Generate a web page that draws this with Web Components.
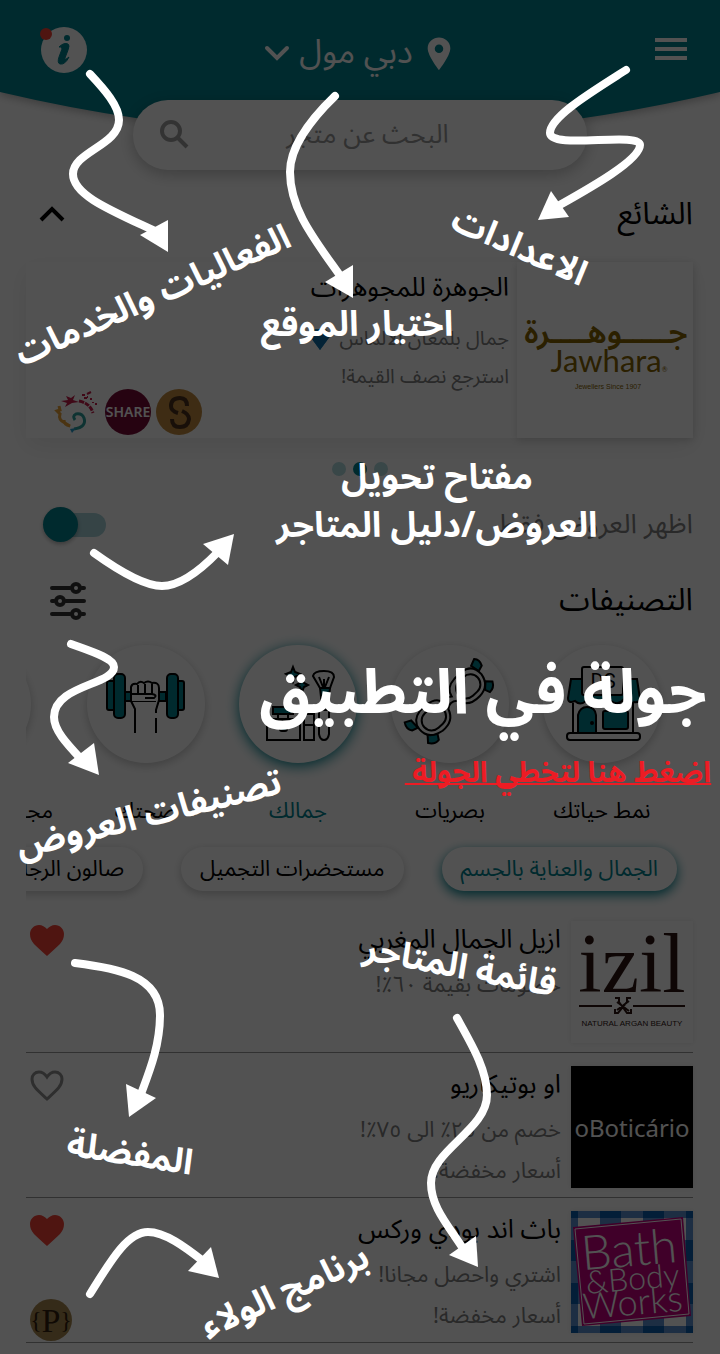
<!DOCTYPE html>
<html lang="ar" dir="rtl">
<head>
<meta charset="utf-8">
<meta name="viewport" content="width=device-width, initial-scale=1">
<title>دبي مول</title>
<style>
  :root { --teal: #00838f; --muted: #808080; --gutter: 26px; }
  html { background: #fff; }
  body { margin: 0; font-family: "Noto Sans Arabic", "DejaVu Sans", "Noto Sans", sans-serif; color: #000; }
</style>
</head>
<body>
<mall-app></mall-app>
<script>
const RESET = `
  * { box-sizing: border-box; }
  button { font: inherit; color: inherit; background: none; border: 0; margin: 0; padding: 0; display: block; cursor: pointer; }
  svg { display: block; direction: ltr; }
`;
function define(name, html, setup) {
  const template = document.createElement('template');
  template.innerHTML = html;
  customElements.define(name, class extends HTMLElement {
    constructor() {
      super();
      this.attachShadow({ mode: 'open' }).append(template.content.cloneNode(true));
    }
    connectedCallback() { if (setup) setup(this, this.shadowRoot); }
  });
}

/* ---- header with location picker ---- */
define('mall-header', `<style>${RESET}
  :host { display: block; position: relative; height: 100px; color: #fff; }
  .curve { position: absolute; inset: 0 0 auto 0; width: 100%; height: 150px; filter: drop-shadow(0 2px 5px rgba(0,0,0,.3)); }
  nav { position: relative; display: grid; grid-template-columns: 1fr auto 1fr; align-items: center; padding: 21px 33px 0; }
  .info { justify-self: end; margin-left: 7px; }
  .place { display: flex; align-items: center; gap: 9px; margin-top: 8px; font-size: 33px; line-height: 48px; }
</style>
<svg class="curve" viewBox="0 0 720 150" preserveAspectRatio="none" aria-hidden="true"><path d="M0 0H720V92Q360 177 0 92Z" fill="#00838f"/></svg>
<nav>
  <button aria-label="القائمة"><svg width="32" height="24" viewBox="0 0 32 24" stroke="#fff" stroke-width="4"><path d="M0 3H32M0 12H32M0 21H32"/></svg></button>
  <button class="place">
    <svg width="34" height="34" viewBox="0 0 24 24" fill="#fff"><path d="M12 1C8 1 4 4 4 8.600C4 14 12 24 12 24S20 14 20 8.600C20 4 16 1 12 1zm0 11a3 3 0 1 1 0-6 3 3 0 0 1 0 6z"/></svg>
    <span>دبي مول</span>
    <svg width="26" height="18" viewBox="0 0 26 18" fill="none" stroke="#fff" stroke-width="4" stroke-linecap="round"><path d="M3 4L13 14L23 4"/></svg>
  </button>
  <button class="info" aria-label="معلومات"><svg width="47" height="49" viewBox="0 0 47 49"><circle cx="24" cy="25" r="23" fill="#fff"/><circle cx="27" cy="13" r="3" fill="#00838f"/><path d="M19 22Q24 17 28 19Q30 20 28 25L25 33Q24 36 29 32Q25 40 20 39Q17 38 19 32L22 24Q22 21 19 22Z" fill="#00838f" stroke="#00838f" stroke-width="1"/><circle cx="6" cy="9" r="6" fill="#f44336"/></svg></button>
</nav>`);

define('search-bar', `<style>${RESET}
  :host { display: block; position: relative; width: 63%; margin: 0 auto; }
  form { display: flex; align-items: center; height: 70px; padding: 0 41px 0 26px; background: #fff; border-radius: 35px; box-shadow: 0 4px 16px rgba(0,0,0,.25); }
  input { flex: 1; min-width: 0; border: 0; padding: 0; background: none; outline: 0; text-align: center; font: 26px/40px "Noto Sans Arabic", "DejaVu Sans", sans-serif; }
  input::placeholder { color: #9a9a9a; opacity: 1; }
</style>
<form role="search" onsubmit="return false">
  <input type="text" aria-label="البحث عن متجر" placeholder="البحث عن متجر">
  <button aria-label="بحث"><svg width="30" height="30" viewBox="0 0 30 30" fill="none" stroke="#a0a0a0" stroke-width="4"><circle cx="12" cy="11" r="9"/><path d="M18 17L28 27"/></svg></button>
</form>`);

define('section-heading', `<style>${RESET}
  :host { display: flex; align-items: center; justify-content: space-between; }
  h2 { margin: 0; font-size: 31px; line-height: 48px; font-weight: 400; }
</style><h2><slot></slot></h2><slot name="action"></slot>`);

define('icon-button', `<style>${RESET}</style><button><slot></slot></button>`, (el, root) => {
  root.querySelector('button').setAttribute('aria-label', el.getAttribute('label'));
});

/* ---- promoted store ---- */
define('promo-card', `<style>${RESET}
  :host { display: flex; height: 176px; background: #fff; box-shadow: 0 8px 24px rgba(0,0,0,.08); }
  .logo { width: 176px; flex: none; box-shadow: 0 2px 8px rgba(0,0,0,.15); }
  .body { position: relative; flex: 1; display: flex; flex-direction: column; padding: 3px 8px 3px 31px; }
  h3 { margin: 0; font-size: 26px; line-height: 46px; font-weight: 400; }
  p { display: flex; align-items: center; gap: 9px; margin: 0; font-size: 20px; line-height: 38px; color: var(--muted); }
  p:first-of-type { padding-top: 9px; }
  .badges { position: absolute; left: 28px; bottom: 2px; display: flex; gap: 4px; direction: ltr; }
</style>
<div class="logo"><svg width="176" height="176" viewBox="0 0 176 176" role="img" aria-label="Jawhara">
  <text x="89" y="81" text-anchor="middle" font-family="Noto Sans Arabic" font-weight="600" font-size="32" fill="#866300">جـــــوهــــرة</text>
  <text x="92" y="110" text-anchor="middle" font-family="Lato" font-size="31" fill="#866300">Jawhara<tspan font-size="7">®</tspan></text>
  <text x="91" y="127" text-anchor="middle" font-family="Liberation Sans" font-size="7" fill="#866300">Jewellers Since 1907</text>
</svg></div>
<div class="body">
  <h3>الجوهرة للمجوهرات</h3>
  <p>جمال بلمعان الألماس <svg width="22" height="22" viewBox="0 0 22 22"><path d="M5 1H17L22 7L11 22L0 7Z" fill="#1b8fc4"/><path d="M0 7H22L11 22Z" fill="#0f6fa8"/></svg></p>
  <p>استرجع نصف القيمة!</p>
  <div class="badges">
    <svg width="47" height="47" viewBox="0 0 47 47" fill="none"><path d="M7 12L14 11L12 7L17 9L21 6L19 11L25 13L18 14L11 18L13 14Z" fill="#c41e4a"/><path d="M25 12Q36 14 39 24" stroke="#c41e4a" stroke-width="3" stroke-dasharray="5 1"/><path d="M28 6H31M33 5L37 3M30 9H33M36 10H38M42 14V16M33 8H34M39 13V14" stroke="#c41e4a" stroke-width="2"/><path d="M5 17L6 21L3 22L6 25Q4 31 11 34L16 37Q10 36 10 31" stroke="#e8a13a" stroke-width="3"/><path d="M20 40Q33 38 30 29Q28 24 22 25Q18 27 21 31" stroke="#2d9e9b" stroke-width="3"/><path d="M16 40L22 39L18 44Z" fill="#289ccb"/></svg>
    <svg width="47" height="47" viewBox="0 0 47 47"><circle cx="23" cy="23" r="23" fill="#780c36"/><text x="23" y="28" text-anchor="middle" font-family="Noto Sans" font-weight="600" font-size="14" fill="#fff">SHARE</text></svg>
    <svg width="47" height="47" viewBox="0 0 47 47"><circle cx="23" cy="23" r="23" fill="#c08a3e"/><path d="M31 17Q31 9 24 9Q15 9 15 17Q15 22 22 24M26 22Q33 25 33 30Q32 38 24 38Q16 38 16 30" fill="none" stroke="#4b311c" stroke-width="4"/></svg>
  </div>
</div>`);

define('pager-dots', `<style>
  :host { display: flex; justify-content: center; gap: 7px; }
  i { width: 14px; height: 14px; border-radius: 50%; background: #b2dbdf; }
  i.on { background: var(--teal); }
</style><i></i><i class="on"></i><i></i>`);

define('offer-switch', `<style>${RESET}
  :host { display: flex; align-items: center; justify-content: space-between; color: var(--muted); }
  label { font-size: 27px; line-height: 40px; }
  input { appearance: none; position: relative; width: 58px; height: 24px; margin: 0 0 0 22px; border-radius: 12px; background: #a8d3da; }
  input::before { content: ""; position: absolute; left: -5px; top: -6px; width: 35px; height: 35px; border-radius: 50%; background: var(--teal); box-shadow: 0 2px 4px rgba(0,0,0,.3); }
</style><label for="only">اظهر العروض فقط</label><input id="only" type="checkbox" role="switch">`);

/* ---- categories ---- */
define('category-item', `<style>${RESET}
  :host { display: block; flex: none; }
  button { display: flex; flex-direction: column; align-items: center; min-width: 118px; }
  .disc { width: 118px; height: 118px; border-radius: 50%; background: #fff; box-shadow: 0 3px 10px rgba(0,0,0,.22); }
  span { margin-top: 28px; font-size: 22px; line-height: 40px; white-space: nowrap; }
  :host([active]) .disc { box-shadow: 0 3px 14px var(--teal); }
  :host([active]) span { color: var(--teal); }
</style><button><div class="disc"><slot name="icon"></slot></div><span><slot></slot></span></button>`);

define('filter-chip', `<style>${RESET}
  :host { display: block; flex: none; }
  button { height: 44px; padding: 0 19px; border-radius: 22px; background: #fff; box-shadow: 0 3px 10px rgba(0,0,0,.22); font-size: 22px; line-height: 40px; white-space: nowrap; }
  :host([active]) button { color: var(--teal); box-shadow: 0 4px 12px var(--teal); }
</style><button><slot></slot></button>`);

define('scroll-strip', `<style>
  :host { display: flex; gap: 34px; overflow: hidden; margin: -20px 0; padding: 20px 0; }
</style><slot></slot>`);

/* ---- store list ---- */
define('store-row', `<style>${RESET}
  :host { display: flex; min-height: 145px; padding-top: 13px; border-bottom: 1px solid #999; }
  .logo { width: 122px; height: 122px; flex: none; box-shadow: 0 0 6px rgba(0,0,0,.1); }
  .text { flex: 1; padding-right: 10px; }
  h3 { margin: -3px 0 3px; font-size: 26px; line-height: 44px; font-weight: 400; }
  ::slotted(p) { margin: 0; font-size: 22px; line-height: 41px; color: var(--muted); }
  .side { display: flex; flex-direction: column; justify-content: space-between; align-items: flex-end; padding: 3px 0 0 3px; }
</style>
<div class="logo"><slot name="logo"></slot></div>
<div class="text"><h3></h3><slot></slot></div>
<div class="side"><button aria-label="المفضلة"><svg width="36" height="33" viewBox="0 0 36 33"><path d="M18 32C6 21 1 18 1 10C1 5 5 1 10 1C13 1 16 3 18 5C20 3 23 1 26 1C31 1 35 5 35 10C35 18 30 21 18 32Z"/></svg></button><slot name="badge"></slot></div>`,
(el, root) => {
  root.querySelector('h3').textContent = el.getAttribute('name');
  const heart = root.querySelector('path');
  if (el.hasAttribute('favourite')) heart.setAttribute('fill', '#f44336');
  else {
    heart.setAttribute('d', 'M18 30C8 21 3 17 3 10C3 6 6 3 10 3C13 3 16 5 18 8C20 5 23 3 26 3C30 3 33 6 33 10C33 17 28 21 18 30Z');
    heart.setAttribute('fill', 'none');
    heart.setAttribute('stroke', '#909090');
    heart.setAttribute('stroke-width', '3');
  }
});

/* ---- guided tour over the app ---- */
define('tour-label', `<style>
  :host { position: absolute; color: #fff; font-weight: 700; font-size: 35px; line-height: 48px; white-space: nowrap; text-align: center; }
  div { transform: translate(-50%, -50%) rotate(var(--turn, 0deg)); position: absolute; left: 0; top: 0; }
</style><div><slot></slot></div>`);

define('tour-overlay', `<style>${RESET}
  :host { position: absolute; inset: 0; overflow: hidden; background: rgba(0,0,0,.68); direction: rtl; }
  svg { position: absolute; left: 0; top: 0; width: 720px; height: 1354px; }
  .big { font-size: 62px; line-height: 80px; }
  .skip { font-size: 29px; line-height: 40px; }
  a { color: #ed1c24; white-space: pre; text-decoration: underline; text-decoration-thickness: 2px; text-decoration-skip-ink: none; }
</style>
<svg viewBox="0 0 720 1354" aria-hidden="true">
  <g fill="none" stroke="#fff" stroke-width="8" stroke-linecap="round">
    <path d="M90 74C105 90 119 106 119 120C119 145 73 152 73 174C73 195 110 210 155 231"/>
    <path d="M335 96C310 120 290 148 290 172C290 210 315 240 341 277"/>
    <path d="M626 70C590 93 550 117 550 133C550 150 640 131 640 145C640 160 590 188 558 206"/>
    <path d="M94 553Q140 586 162 586Q185 586 218 552"/>
    <path d="M71 644C90 651 114 658 114 667C114 685 54 685 54 717C54 730 66 743 81 759"/>
    <path d="M75 963C115 968 160 975 160 1015C160 1045 150 1070 141 1094"/>
    <path d="M457 1018C472 1045 487 1070 487 1095C487 1130 431 1150 431 1183C431 1207 448 1225 464 1250"/>
    <path d="M90 1294C110 1262 127 1232 148 1232C165 1232 185 1247 203 1261"/>
  </g>
  <g fill="#fff">
    <path d="M168 252L140 235L168 220Z"/><path d="M353 298L325 282L353 265Z"/><path d="M538 220L551 191L569 217Z"/>
    <path d="M234 534L203 544L228 565Z"/><path d="M99 775L68 763L94 743Z"/><path d="M129 1117L126 1084L156 1098Z"/>
    <path d="M478 1267L449 1255L476 1236Z"/><path d="M219 1278L211 1247L188 1271Z"/>
  </g>
</svg>
<tour-label style="left:153px;top:296px;--turn:-24deg">الفعاليات والخدمات</tour-label>
<tour-label style="left:519px;top:247px;--turn:24deg">الاعدادات</tour-label>
<tour-label style="left:357px;top:325px">اختيار الموقع</tour-label>
<tour-label style="left:437px;top:502px">مفتاح تحويل<br>العروض/دليل المتاجر</tour-label>
<tour-label class="big" style="left:483px;top:694px">جولة في التطبيق</tour-label>
<tour-label class="skip" style="left:558px;top:773px"><a href="#skip">اضغط هنا لتخطي الجولة </a></tour-label>
<tour-label style="left:149px;top:815px;--turn:-14deg">تصنيفات العروض</tour-label>
<tour-label style="left:460px;top:967px;--turn:11deg">قائمة المتاجر</tour-label>
<tour-label style="left:130px;top:1154px;--turn:9deg">المفضلة</tour-label>
<tour-label style="left:285px;top:1292px;--turn:-24deg">برنامج الولاء</tour-label>`);

define('mall-app', `<style>${RESET}
  :host { display: block; position: relative; min-height: 100vh; overflow: hidden; background: #fff; }
  main { display: flex; flex-direction: column; padding: 0 27px 10px var(--gutter); }
  .popular { padding: 20px 0 24px; }
  pager-dots { padding: 24px 0; }
  offer-switch { margin-top: 5px; }
  .cats { padding: 31px 0 21px; }
  .first { margin-right: 32px; }
  .chips { gap: 38px; margin-top: -4px; }
  .lead { margin-right: 16px; }
  .list { margin-top: 17px; }
</style>
<mall-header></mall-header>
<search-bar></search-bar>
<main>
  <section-heading class="popular">الشائع<icon-button slot="action" label="طي" style="margin-left:12px"><svg width="28" height="18" viewBox="0 0 28 18" fill="none" stroke="#000" stroke-width="4"><path d="M3 15L14 4L25 15"/></svg></icon-button></section-heading>
  <promo-card></promo-card>
  <pager-dots></pager-dots>
  <offer-switch></offer-switch>
  <section-heading class="cats">التصنيفات<icon-button slot="action" label="تصفية" style="margin-left:24px"><svg width="36" height="40" viewBox="0 0 36 40" fill="none" stroke="#333" stroke-width="4" stroke-linecap="round"><path d="M2 8H20M32 8H34M2 21H4M16 21H34M2 34H20M32 34H34"/><circle cx="26" cy="8" r="4"/><circle cx="10" cy="21" r="4"/><circle cx="26" cy="34" r="4"/></svg></icon-button></section-heading>
  <scroll-strip>
    <category-item class="first">نمط حياتك<svg slot="icon" viewBox="0 0 118 118" fill="none" stroke="#000" stroke-width="2"><path d="M30 58V88H90V58" /><rect x="24" y="88" width="73" height="7" rx="3"/><path d="M28 34H94L97 54Q96 58 91 57Q85 61 80 55Q75 61 68 56Q62 61 55 56Q49 61 43 56Q37 61 32 56Q25 59 25 53Z" fill="#00838f"/><rect x="39" y="22" width="41" height="28" rx="2" fill="#fff"/><text x="60" y="43" text-anchor="middle" font-family="Roboto" font-size="20" fill="#000" stroke="none">DS</text><path d="M35 88V70Q37 62 44 62Q52 62 53 70V88Z" fill="#00838f"/><circle cx="49" cy="78" r="1"/><rect x="60" y="66" width="25" height="18" rx="2" fill="#00838f"/></svg></category-item>
    <category-item>بصريات<svg slot="icon" viewBox="0 0 118 118" fill="none" stroke="#000" stroke-width="2"><g transform="rotate(-43 59 57)"><path d="M18 44L12 41Q8 47 12 52L18 54ZM20 66L15 72Q19 78 25 77L28 72ZM101 54L107 52Q110 46 106 42L99 45ZM93 72L95 77Q101 77 104 71L99 66Z" fill="#00838f"/><path d="M31 43H40Q53 44 54 54Q59 50 64 54Q66 44 78 43H88Q101 44 101 58Q99 72 85 73Q69 74 65 61Q59 56 53 61Q49 74 34 73Q17 70 18 56Q19 45 31 43Z" fill="#fff"/><rect x="23" y="48" width="26" height="20" rx="10"/><rect x="70" y="48" width="26" height="20" rx="10"/></g></svg></category-item>
    <category-item active>جمالك<svg slot="icon" viewBox="0 0 118 118" fill="none" stroke="#000" stroke-width="2"><path d="M54 22L56 27L61 29L56 32L54 37L52 32L47 29L52 27ZM63 33L65 38L69 40L65 42L63 47L61 42L57 40L61 38ZM34 62H54V69H34ZM81 43H91L89 61H83Z" fill="#00838f"/><path d="M74 31Q75 26 85 26Q95 26 95 32L91 43H81ZM80 32L84 42M85 34V42M90 32L86 42M28 74H61V95H28ZM65 69H75V95H65ZM65 80H75M39 69V74H49V69M80 65H90V89Q89 95 85 95Q81 95 80 89Z"/><rect x="41" y="80" width="7" height="6" rx="2" fill="#00838f"/></svg></category-item>
    <category-item>صحتك<svg slot="icon" viewBox="0 0 118 118" fill="none" stroke="#000" stroke-width="2"><g fill="#00838f"><rect x="20" y="36" width="9" height="29" rx="2"/><rect x="88" y="36" width="9" height="29" rx="2"/><path d="M37 47H79V56H37Z"/><rect x="27" y="29" width="11" height="44" rx="4"/><rect x="80" y="29" width="11" height="44" rx="4"/></g><path d="M44 56V42Q45 38 50 39Q53 35 57 38Q61 35 65 38Q72 37 72 43V56L69 65V68V56Z" fill="#fff" stroke="none"/><path d="M44 56V42Q45 38 50 39Q53 35 57 38Q61 35 65 38Q72 37 72 43V55L69 65V68M69 73V88M44 56L48 64V88M51 40V49M58 39V49M65 39V49M44 49H65Q71 50 67 53H58" /></svg></category-item>
    <category-item>مجوهرات وساعات</category-item>
  </scroll-strip>
  <scroll-strip class="chips">
    <filter-chip class="lead" active>الجمال والعناية بالجسم</filter-chip>
    <filter-chip>مستحضرات التجميل</filter-chip>
    <filter-chip>صالون الرجال</filter-chip>
  </scroll-strip>
  <div class="list">
    <store-row name="ازيل الجمال المغربي" favourite>
      <svg slot="logo" viewBox="0 0 122 122" role="img" aria-label="izil Natural Argan Beauty"><text x="61" y="71" text-anchor="middle" font-family="Liberation Serif" font-size="84" fill="#2d1510">izil</text><path d="M8 85H41M62 85H114M44 77H48V81L56 92H60V88M60 77H56V81L47 92H44V88M46 81L58 90M46 89L58 80" fill="none" stroke="#2d1510" stroke-width="2"/><text x="61" y="105" text-anchor="middle" font-family="Liberation Sans" font-size="8" fill="#2d1510">NATURAL ARGAN BEAUTY</text></svg>
      <p>خصومات بقيمة ٦٠٪!</p>
    </store-row>
    <store-row name="او بوتيكاريو">
      <svg slot="logo" viewBox="0 0 122 122" role="img" aria-label="oBoticário"><path d="M0 0H122V122H0Z" fill="#000"/><text x="61" y="71" text-anchor="middle" font-family="Noto Sans" font-size="24" fill="#fff">oBoticário</text></svg>
      <p>خصم من ٢٥٪ الى ٧٥٪!</p><p>أسعار مخفضة!</p>
    </store-row>
    <store-row name="باث اند بودي وركس" favourite>
      <svg slot="logo" viewBox="0 0 122 122" role="img" aria-label="Bath &amp; Body Works"><defs><pattern id="g" x="-14" y="-14" width="43" height="43" patternUnits="userSpaceOnUse"><path d="M0 0H43V43H0Z" fill="#fff"/><path d="M0 0H43V21H0ZM0 0H21V43H0Z" fill="#5a8fd0"/><path d="M0 0H21V21H0Z" fill="#0b5fae"/></pattern></defs><path d="M0 0H122V122H0Z" fill="url(#g)"/><path d="M2 16L112 6L120 105L11 115Z" fill="#c8007f"/><path d="M4 18L110 8L118 103L13 113Z" fill="none" stroke="#fff" stroke-width="1"/><g transform="rotate(-5 61 61)" font-family="Lato" font-weight="300" fill="#fff" text-anchor="middle"><text x="60" y="55" font-size="48">Bath</text><text x="61" y="79" font-size="32">&amp;Body</text><text x="59" y="104" font-size="36">Works</text></g></svg>
      <p>اشتري واحصل مجانا!</p><p>أسعار مخفضة!</p>
      <svg slot="badge" width="44" height="44" viewBox="0 0 44 44" role="img" aria-label="P"><circle cx="22" cy="22" r="21" fill="#a68750"/><g font-family="Liberation Serif" fill="#33210f" text-anchor="middle"><text x="22" y="34" font-size="34">P</text><text x="7" y="30" font-size="24">{</text><text x="37" y="30" font-size="24">}</text></g></svg>
    </store-row>
  </div>
</main>
<tour-overlay></tour-overlay>`);
</script>
</body>
</html>
